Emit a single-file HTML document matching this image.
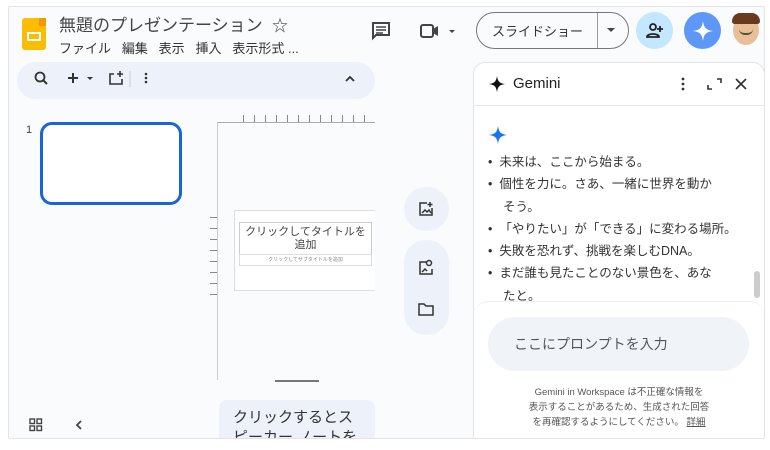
<!DOCTYPE html>
<html><head><meta charset="utf-8"><style>
*{box-sizing:border-box;margin:0;padding:0}
body{width:770px;height:450px;background:#fff;font-family:"Liberation Sans","Noto Sans CJK JP",sans-serif;position:relative;overflow:hidden;color:#1f1f1f}
.frame{position:absolute;left:8px;top:6px;width:757px;height:433px;background:#f9fbfd;border:1px solid #e3e3e3;border-radius:2px;overflow:hidden}
.abs{position:absolute}
svg{display:block}
</style></head><body>
<div class="frame">
  <div class="abs" style="left:13px;top:11px;width:24px;height:32px;background:#fbbc04;border-radius:3px;clip-path:polygon(0 0,70% 0,100% 25%,100% 100%,0 100%)"></div>
  <div class="abs" style="left:30px;top:11px;width:7px;height:8px;background:#f29900"></div>
  <div class="abs" style="left:18px;top:25px;width:14px;height:9px;border:2px solid #fff;border-radius:1px"></div>
  <div class="abs" style="left:50px;top:4px;font-size:17px;color:#444">無題のプレゼンテーション</div>
  <div class="abs" style="left:263px;top:5px;font-size:16px;color:#444">☆</div>
  <div class="abs" style="left:50px;top:31px;font-size:13px;color:#333">ファイル&nbsp;&nbsp;&nbsp;編集&nbsp;&nbsp;&nbsp;表示&nbsp;&nbsp;&nbsp;挿入&nbsp;&nbsp;&nbsp;表示形式 ...</div>
  <svg class="abs" style="left:362px;top:14px" width="20" height="20" viewBox="0 0 20 20"><path d="M2 2h16v12H5l-3 3z" fill="none" stroke="#444" stroke-width="2"/><path d="M5 6h10M5 9h10M5 12h7" stroke="#444" stroke-width="1.5"/></svg>
  <svg class="abs" style="left:410px;top:15px" width="40" height="18" viewBox="0 0 40 18"><rect x="2" y="3" width="12" height="12" rx="2" fill="none" stroke="#444" stroke-width="2"/><path d="M14 7l5-3v10l-5-3z" fill="#444"/><path d="M30 8h6l-3 3z" fill="#444"/></svg>
  <div class="abs" style="left:467px;top:5px;width:153px;height:37px;border:1px solid #777;border-radius:19px"></div>
  <div class="abs" style="left:588px;top:6px;width:1px;height:35px;background:#999"></div>
  <div class="abs" style="left:483px;top:14px;font-size:13px;color:#333">スライドショー</div>
  <svg class="abs" style="left:597px;top:20px" width="10" height="6"><path d="M1 1h8L5 5z" fill="#444"/></svg>
  <div class="abs" style="left:627px;top:5px;width:37px;height:37px;border-radius:50%;background:#c2e7ff"></div>
  <svg class="abs" style="left:636px;top:14px" width="20" height="20" viewBox="0 0 20 20"><circle cx="8" cy="6" r="3" fill="none" stroke="#222" stroke-width="1.8"/><path d="M2 16c0-4 12-4 12 0z" fill="none" stroke="#222" stroke-width="1.8"/><path d="M15 5v6M12 8h6" stroke="#222" stroke-width="1.8"/></svg>
  <div class="abs" style="left:675px;top:5px;width:37px;height:37px;border-radius:50%;background:#5e97f6"></div>
  <svg class="abs" style="left:683px;top:13px" width="22" height="22" viewBox="0 0 22 22"><path d="M11 1C12 8 14 10 21 11 14 12 12 14 11 21 10 14 8 12 1 11 8 10 10 8 11 1z" fill="#fff"/></svg>
  <div class="abs" style="left:724px;top:8px;width:26px;height:30px;border-radius:50%;background:#e9bf99"></div>
  <div class="abs" style="left:723px;top:6px;width:28px;height:11px;border-radius:12px 12px 4px 4px;background:#6b3a1e"></div>
  <div class="abs" style="left:730px;top:22px;width:14px;height:6px;border-bottom:2px solid #553;border-radius:0 0 8px 8px"></div>
  <div class="abs" style="left:8px;top:55px;width:358px;height:37px;background:#edf2fa;border-radius:19px"></div>
  <svg class="abs" style="left:24px;top:63px" width="120" height="18" viewBox="0 0 120 18"><circle cx="7" cy="7" r="4.5" fill="none" stroke="#333" stroke-width="1.8"/><path d="M10 10l4 4" stroke="#333" stroke-width="2"/><path d="M40 3v10M35 8h10" stroke="#333" stroke-width="2"/><path d="M54 7h6l-3 3z" fill="#333"/><path d="M81 4h-4v10h12v-5" fill="none" stroke="#333" stroke-width="1.6"/><path d="M87 1v6M84 4h6" stroke="#333" stroke-width="1.6"/><path d="M97 1v16" stroke="#ccc"/><circle cx="113" cy="4" r="1.3" fill="#333"/><circle cx="113" cy="8" r="1.3" fill="#333"/><circle cx="113" cy="12" r="1.3" fill="#333"/></svg>
  <svg class="abs" style="left:335px;top:67px" width="12" height="10"><path d="M2 7l4-4 4 4" fill="none" stroke="#333" stroke-width="1.8"/></svg>
  <div class="abs" style="left:17px;top:117px;font-size:11px;color:#444">1</div>
  <div class="abs" style="left:31px;top:115px;width:142px;height:83px;border:3px solid #1a64d6;border-radius:12px;background:#fff"></div>
  <svg class="abs" style="left:20px;top:410px" width="70" height="16"><g fill="none" stroke="#444" stroke-width="1.4"><rect x="1" y="2" width="4.5" height="4.5"/><rect x="8" y="2" width="4.5" height="4.5"/><rect x="1" y="9" width="4.5" height="4.5"/><rect x="8" y="9" width="4.5" height="4.5"/><path d="M52 4l-4 4 4 4" stroke-width="1.8"/></g></svg>
  <div class="abs" style="left:208px;top:115px;width:158px;height:1px;background:#aaa"></div>
  <div class="abs" style="left:234px;top:108px;width:132px;height:7px;background:repeating-linear-gradient(90deg,#888 0 1px,transparent 1px 11px)"></div>
  <div class="abs" style="left:208px;top:115px;width:1px;height:258px;background:#ccc"></div>
  <div class="abs" style="left:201px;top:210px;width:7px;height:78px;background:repeating-linear-gradient(180deg,#888 0 1px,transparent 1px 11px)"></div>
  <div class="abs" style="left:225px;top:203px;width:141px;height:81px;background:#fff;border:1px solid #ddd;border-right:none"></div>
  <div class="abs" style="left:230px;top:215px;width:133px;height:33px;border:1px solid #ccc;font-size:11px;color:#444;text-align:center;line-height:13px;padding-top:3px">クリックしてタイトルを追加</div>
  <div class="abs" style="left:230px;top:247px;width:133px;height:12px;border:1px solid #ddd;font-size:5px;color:#888;text-align:center;line-height:10px">クリックしてサブタイトルを追加</div>
  <div class="abs" style="left:266px;top:373px;width:44px;height:2px;background:#777"></div>
  <div class="abs" style="left:395px;top:180px;width:45px;height:44px;border-radius:22px;background:#edf2fa"></div>
  <div class="abs" style="left:395px;top:233px;width:45px;height:95px;border-radius:22px;background:#edf2fa"></div>
  <svg class="abs" style="left:408px;top:194px" width="18" height="120" viewBox="0 0 18 120"><g fill="none" stroke="#333" stroke-width="1.5"><path d="M10 2H3v12h12V7"/><path d="M13 1v5M10.5 3.5h5"/><path d="M5 12l3-3 2 2 2-2 2 3"/><path d="M10 61H3v12h12v-5"/><circle cx="12" cy="62" r="2.5"/><path d="M5 71l3-3 2 2"/><path d="M2 103h5l2 2h7v9H2z"/></g></svg>
  <div class="abs" style="left:210px;top:393px;width:156px;height:50px;background:#edf2fa;border-radius:8px"></div>
  <div class="abs" style="left:224px;top:401px;font-size:15px;color:#333;line-height:20px;width:130px">クリックするとスピーカー ノートを</div>
  <div class="abs" style="left:464px;top:55px;width:292px;height:390px;background:#fff;border:1px solid #e3e3e3;border-radius:12px 12px 0 0"></div>
  <svg class="abs" style="left:479px;top:68px" width="18" height="18" viewBox="0 0 22 22"><path d="M11 1C12 8 14 10 21 11 14 12 12 14 11 21 10 14 8 12 1 11 8 10 10 8 11 1z" fill="#111"/></svg>
  <div class="abs" style="left:504px;top:68px;font-size:15px;color:#222">Gemini</div>
  <svg class="abs" style="left:669px;top:68px" width="76" height="18"><circle cx="5" cy="4" r="1.4" fill="#333"/><circle cx="5" cy="9" r="1.4" fill="#333"/><circle cx="5" cy="14" r="1.4" fill="#333"/><path d="M30 10v4h4M39 4h4v4" fill="none" stroke="#333" stroke-width="1.6"/><path d="M58 4l10 10M68 4l-10 10" stroke="#333" stroke-width="1.6"/></svg>
  <div class="abs" style="left:465px;top:98px;width:290px;height:1px;background:#e8e8e8"></div>
  <svg class="abs" style="left:479px;top:118px" width="20" height="20" viewBox="0 0 22 22"><path d="M11 1C12 8 14 10 21 11 14 12 12 14 11 21 10 14 8 12 1 11 8 10 10 8 11 1z" fill="#1b74f0"/></svg>
  <div class="abs" style="left:479px;top:144px;font-size:12.5px;color:#333;line-height:22.3px;width:262px">
    <div>•&nbsp; 未来は、ここから始まる。</div>
    <div>•&nbsp; 個性を力に。さあ、一緒に世界を動か</div>
    <div style="padding-left:15px">そう。</div>
    <div>•&nbsp; 「やりたい」が「できる」に変わる場所。</div>
    <div>•&nbsp; 失敗を恐れず、挑戦を楽しむDNA。</div>
    <div>•&nbsp; まだ誰も見たことのない景色を、あな</div>
    <div style="padding-left:15px">たと。</div>
  </div>
  <div class="abs" style="left:745px;top:264px;width:6px;height:27px;background:#ccc;border-radius:3px"></div>
  <div class="abs" style="left:465px;top:294px;width:290px;height:150px;background:#fff;border-top:1px solid #eee;border-radius:14px 14px 0 0"></div>
  <div class="abs" style="left:479px;top:310px;width:261px;height:54px;background:#f0f4f9;border-radius:27px"></div>
  <div class="abs" style="left:505px;top:327px;font-size:14px;color:#555">ここにプロンプトを入力</div>
  <div class="abs" style="left:477px;top:378px;width:266px;font-size:9.5px;color:#555;line-height:15px;text-align:center">Gemini in Workspace は不正確な情報を<br>表示することがあるため、生成された回答<br>を再確認するようにしてください。 <u>詳細</u></div>
</div>
</body></html>
